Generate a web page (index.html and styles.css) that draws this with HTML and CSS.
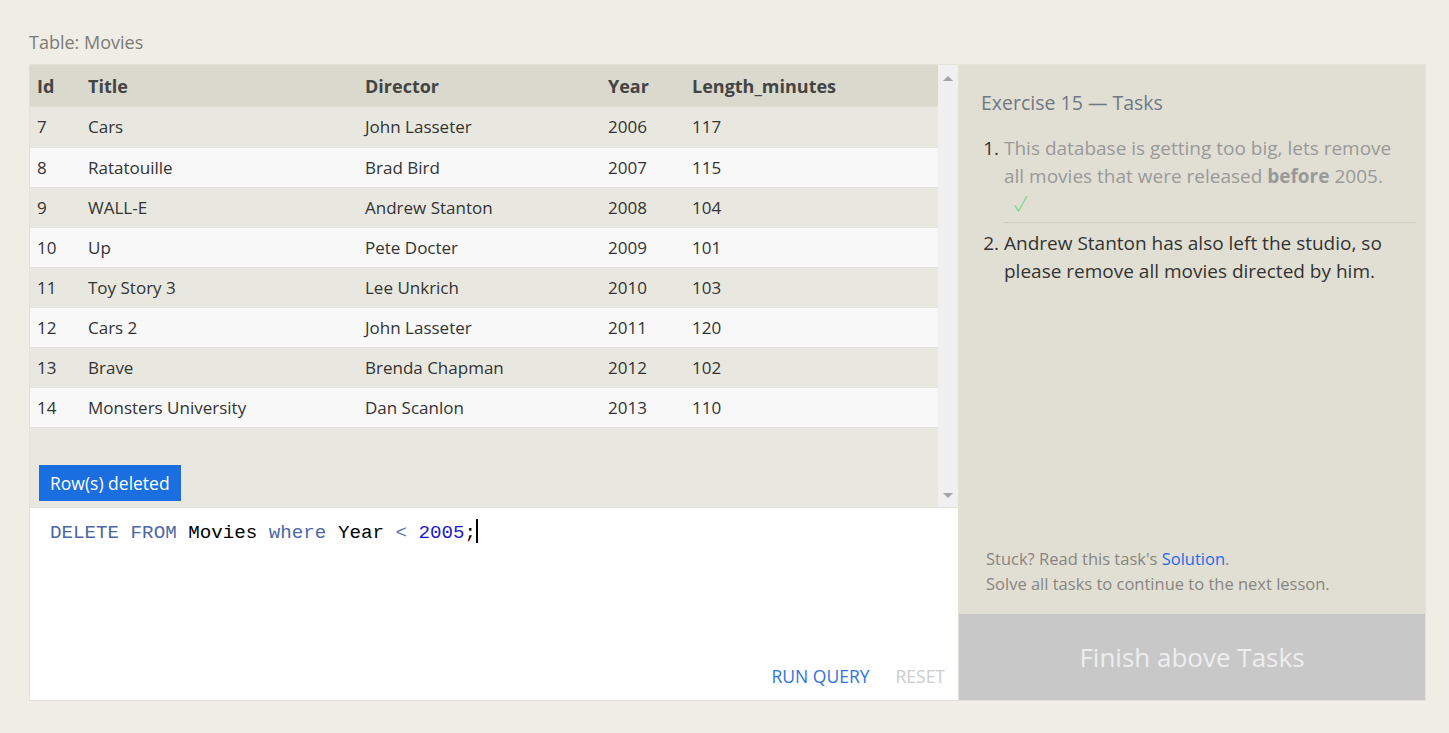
FILE: index.html
```html
<!DOCTYPE html>
<html>
<head>
<meta charset="utf-8">
<link rel="stylesheet" href="styles.css">
</head>
<body>
<div class="page">
  <div class="caption">Table: Movies</div>
  <div class="main">
    <div class="left">
      <div class="results">
        <div class="table-area">
          <table class="movies">
            <thead>
              <tr><th class="c-id">Id</th><th class="c-title">Title</th><th class="c-dir">Director</th><th class="c-year">Year</th><th class="c-len">Length_minutes</th></tr>
            </thead>
            <tbody>
              <tr><td>7</td><td>Cars</td><td>John Lasseter</td><td>2006</td><td>117</td></tr>
              <tr><td>8</td><td>Ratatouille</td><td>Brad Bird</td><td>2007</td><td>115</td></tr>
              <tr><td>9</td><td>WALL-E</td><td>Andrew Stanton</td><td>2008</td><td>104</td></tr>
              <tr><td>10</td><td>Up</td><td>Pete Docter</td><td>2009</td><td>101</td></tr>
              <tr><td>11</td><td>Toy Story 3</td><td>Lee Unkrich</td><td>2010</td><td>103</td></tr>
              <tr><td>12</td><td>Cars 2</td><td>John Lasseter</td><td>2011</td><td>120</td></tr>
              <tr><td>13</td><td>Brave</td><td>Brenda Chapman</td><td>2012</td><td>102</td></tr>
              <tr><td>14</td><td>Monsters University</td><td>Dan Scanlon</td><td>2013</td><td>110</td></tr>
            </tbody>
          </table>
          <div class="status"><span class="badge">Row(s) deleted</span></div>
        </div>
        <div class="scrollbar">
          <span class="arrow up"></span>
          <span class="arrow down"></span>
        </div>
      </div>
      <div class="editor">
        <div class="code"><span class="kw">DELETE</span> <span class="kw">FROM</span> Movies <span class="kw">where</span> Year <span class="op">&lt;</span> <span class="num">2005</span>;<span class="cursor"></span></div>
        <div class="actions"><span class="run">RUN QUERY</span><span class="reset">RESET</span></div>
      </div>
    </div>
    <div class="right">
      <div class="tasks">
        <div class="heading">Exercise 15 — Tasks</div>
        <ol class="task-list">
          <li class="done"><span class="txt">This database is getting too big, lets remove all movies that were released <b>before</b> 2005.</span><span class="check"><svg width="14" height="17" viewBox="0 0 14 17"><path d="M1 10.5 L4.5 16 L13 1" fill="none" stroke="#86d394" stroke-width="1.4"/></svg></span></li>
          <li><span class="txt-active">Andrew Stanton has also left the studio, so please remove all movies directed by him.</span></li>
        </ol>
      </div>
      <div class="help">
        <div>Stuck? Read this task's <span class="link">Solution</span>.</div>
        <div>Solve all tasks to continue to the next lesson.</div>
      </div>
      <div class="finish">Finish above Tasks</div>
    </div>
  </div>
</div>
</body>
</html>
```

FILE: styles.css
```css
* { box-sizing: border-box; }
html, body { margin: 0; padding: 0; }
body {
  background: #efede6;
  font-family: "Open Sans", "Noto Sans", sans-serif;
  color: #333;
}
.page {
  padding: 30px 23px 0 29px;
}
.caption {
  font-size: 18px;
  color: #7d7b76;
  line-height: 24px;
  margin-bottom: 10px;
}
.main {
  display: flex;
  height: 637px;
}
.left {
  width: 930px;
  display: flex;
  flex-direction: column;
  border: 1px solid #e4e1d8;
}
.results {
  display: flex;
  height: 443px;
  border-bottom: 1px solid #e4e1d8;
}
.table-area {
  flex: 1;
  background: #e9e8e0;
  display: flex;
  flex-direction: column;
}
.movies {
  border-collapse: collapse;
  width: 908px;
  table-layout: fixed;
  font-size: 17px;
}
.movies th {
  background: #dad9ce;
  text-align: left;
  font-weight: 700;
  color: #444;
  height: 42px;
  padding: 0 7px;
  font-size: 18px;
}
.movies td {
  height: 40px;
  padding: 0 7px;
  border-bottom: 1px solid #e3e3e0;
  color: #333;
}
.movies tbody tr:nth-child(odd) td { background: #e9e8e0; }
.movies tbody tr:nth-child(even) td { background: #f8f8f8; }
.c-id { width: 51px; }
.c-title { width: 277px; }
.c-dir { width: 243px; }
.c-year { width: 84px; }
.c-len { width: 253px; }
.status {
  flex: 1;
  display: flex;
  align-items: flex-end;
  padding: 0 0 6px 9px;
}
.badge {
  background: #1a6ee0;
  color: #fff;
  font-size: 17.5px;
  height: 36px;
  line-height: 36px;
  padding: 0 11px;
}
.scrollbar {
  width: 21px;
  background: #f0f0f0;
  display: flex;
  flex-direction: column;
  justify-content: space-between;
  align-items: center;
  padding: 11px 0 9px;
}
.arrow {
  width: 0;
  height: 0;
  border-left: 5px solid transparent;
  border-right: 5px solid transparent;
}
.arrow.up { border-bottom: 5px solid #a3a3a3; }
.arrow.down { border-top: 5px solid #a3a3a3; }
.editor {
  flex: 1;
  background: #fff;
  display: flex;
  flex-direction: column;
  justify-content: space-between;
}
.code {
  font-family: "Liberation Mono", monospace;
  font-size: 19.2px;
  color: #000;
  padding: 11px 20px;
  line-height: 24px;
}
.kw { color: #4b69a6; }
.op { color: #5a72b0; }
.num { color: #1a1acc; }
.cursor {
  display: inline-block;
  width: 2px;
  height: 24px;
  background: #000;
  vertical-align: -5px;
}
.actions {
  display: flex;
  justify-content: flex-end;
  gap: 26px;
  padding: 0 13px 12px 0;
  font-size: 17.5px;
}
.run { color: #2f74e0; }
.reset { color: #cccccc; }
.right {
  width: 467px;
  background: #e1dfd4;
  border: 1px solid #e4e1d8;
  border-left: none;
  display: flex;
  flex-direction: column;
}
.tasks {
  flex: 1;
  padding: 24px 9px 0 22px;
}
.heading {
  font-size: 19.5px;
  color: #6f7983;
  line-height: 28px;
  margin-bottom: 17px;
}
.task-list {
  margin: 0;
  padding-left: 23px;
  font-size: 19px;
  line-height: 28px;
}
.task-list li {
  color: #333;
  padding-bottom: 6px;
}
.task-list li.done {
  border-bottom: 1px solid #cfccc1;
  margin-bottom: 6px;
  padding-bottom: 8px;
}
.txt { color: #999; }
.txt b { font-weight: 700; }
.check {
  display: block;
  padding-left: 10px;
  height: 24px;
  line-height: 0;
  padding-top: 5px;
}
.help {
  padding: 0 20px 18px 27px;
  font-size: 16.5px;
  line-height: 25px;
  color: #888580;
}
.link { color: #1e6ee8; }
.finish {
  height: 86px;
  background: #c8c8c8;
  color: #eeeeee;
  font-size: 26px;
  display: flex;
  align-items: center;
  justify-content: center;
}
```
